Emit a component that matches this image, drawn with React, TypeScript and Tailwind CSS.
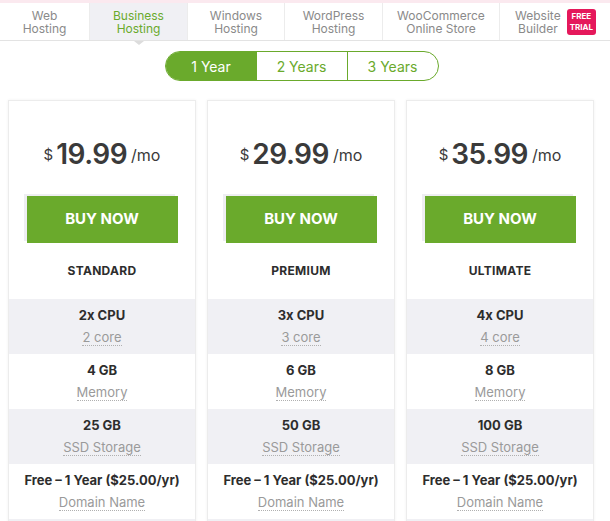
import React from 'react';

const tabs = [
  { top: 'Web', bottom: 'Hosting', w: 'w-[90px]' },
  { top: 'Business', bottom: 'Hosting', w: 'w-[98px]', active: true },
  { top: 'Windows', bottom: 'Hosting', w: 'w-[97px]' },
  { top: 'WordPress', bottom: 'Hosting', w: 'w-[98px]' },
  { top: 'WooCommerce', bottom: 'Online Store', w: 'w-[117px]' },
];

const plans = [
  { price: '19.99', name: 'STANDARD', cpu: '2x CPU', core: '2 core', mem: '4 GB', ssd: '25 GB' },
  { price: '29.99', name: 'PREMIUM', cpu: '3x CPU', core: '3 core', mem: '6 GB', ssd: '50 GB' },
  { price: '35.99', name: 'ULTIMATE', cpu: '4x CPU', core: '4 core', mem: '8 GB', ssd: '100 GB' },
];

function Feature({ title, label, gray }: { title: string; label: string; gray?: boolean }) {
  return (
    <div className={`h-[55px] flex flex-col items-center justify-center ${gray ? 'bg-[#f0f0f4]' : 'bg-white'}`}>
      <div className="text-[13px] font-bold text-[#2d2d2d] leading-[16px]">{title}</div>
      <div className="mt-[6px] text-[13px] text-[#9a9a9a] leading-[16px] border-b border-dotted border-[#b0b0b0]">{label}</div>
    </div>
  );
}

export default function App() {
  return (
    <div className="w-[610px] h-[521px] overflow-hidden bg-white" style={{ fontFamily: 'Inter, "Noto Sans", sans-serif' }}>
      {/* Tabs */}
      <div className="border-t-[3px] border-[#fbe9ef] border-b border-b-[#e3e3e3] relative flex h-[41px]">
        {tabs.map((t) => (
          <div
            key={t.top}
            className={`${t.w} relative flex flex-col items-center justify-center border-r border-[#ececec] text-[12px] leading-[13px] ${t.active ? 'bg-[#f0f0f4] text-[#6aaa2c]' : 'text-[#8a8a8a]'}`}
          >
            <span>{t.top}</span>
            <span>{t.bottom}</span>
            {t.active && (
              <span className="absolute left-1/2 -translate-x-1/2 -bottom-[5px] w-0 h-0 border-l-[5px] border-r-[5px] border-t-[4px] border-l-transparent border-r-transparent border-t-[#dcdcdc]" />
            )}
          </div>
        ))}
        <div className="flex-1 flex items-center justify-end pr-[14px] gap-[6px]">
          <div className="flex flex-col items-center text-[12px] leading-[13px] text-[#8a8a8a]">
            <span>Website</span>
            <span>Builder</span>
          </div>
          <div className="bg-[#e5185b] rounded-[3px] px-[3px] py-[2px] text-white text-[8px] font-bold leading-[11px] text-center">
            FREE<br />TRIAL
          </div>
        </div>
      </div>

      {/* Period toggle */}
      <div className="flex justify-center mt-[10px] pr-[7px]">
        <div className="flex h-[30px] rounded-full border border-[#6aaa2c] overflow-hidden text-[14px]">
          <div className="w-[91px] bg-[#6aaa2c] text-white flex items-center justify-center">1 Year</div>
          <div className="w-[91px] text-[#6aaa2c] flex items-center justify-center border-r border-[#6aaa2c]">2 Years</div>
          <div className="w-[90px] text-[#6aaa2c] flex items-center justify-center">3 Years</div>
        </div>
      </div>

      {/* Cards */}
      <div className="flex gap-[11px] pl-[8px] mt-[19px]">
        {plans.map((p) => (
          <div key={p.name} className="w-[188px] shrink-0 border border-[#ececec] shadow-[0_0_3px_rgba(0,0,0,0.06)] bg-white">
            <div className="pt-[36px] flex items-end justify-center text-[#3a3a3a]">
              <span className="text-[15px] mb-[5px] mr-[3px]">$</span>
              <span className="text-[28px] font-semibold leading-[34px] tracking-[-0.5px]">{p.price}</span>
              <span className="text-[16px] ml-[4px] mb-[4px]">/mo</span>
            </div>
            <div className="flex justify-center mt-[25px]">
              <div className="w-[151px] h-[47px] bg-[#6aaa2c] shadow-[-3px_-2px_0_#eeeef2] text-white font-bold text-[15px] flex items-center justify-center">
                BUY NOW
              </div>
            </div>
            <div className="h-[56px] flex items-center justify-center text-[12px] font-bold text-[#2d2d2d] tracking-[0.3px]">
              {p.name}
            </div>
            <Feature title={p.cpu} label={p.core} gray />
            <Feature title={p.mem} label="Memory" />
            <Feature title={p.ssd} label="SSD Storage" gray />
            <Feature title="Free – 1 Year ($25.00/yr)" label="Domain Name" />
            <div className="h-[20px] bg-[#f0f0f4]" />
          </div>
        ))}
      </div>
    </div>
  );
}
